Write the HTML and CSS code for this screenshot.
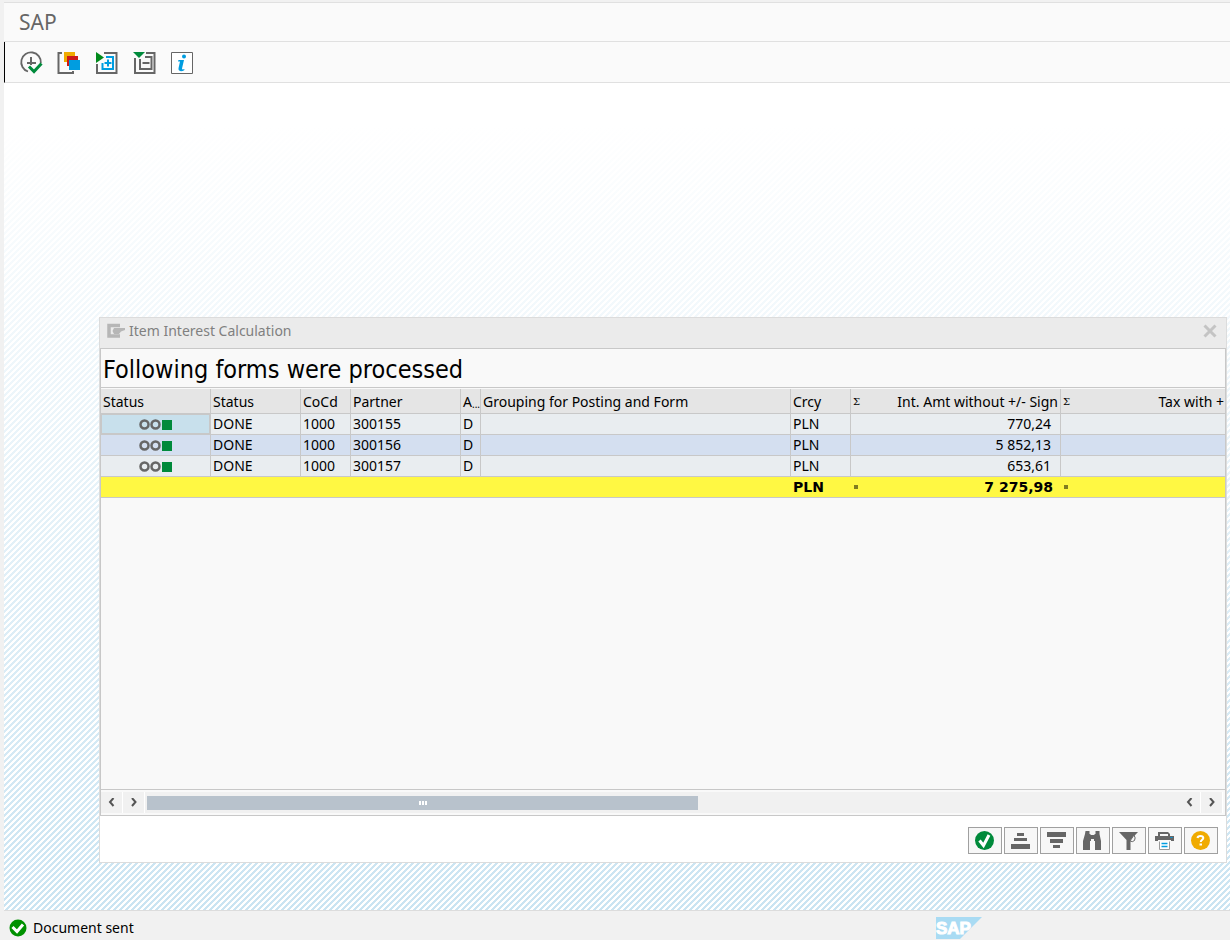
FILE: index.html
```html
<!DOCTYPE html>
<html lang="en">
<head>
<meta charset="utf-8">
<title>SAP</title>
<meta name="viewport" content="width=device-width, initial-scale=1">
<link rel="stylesheet" href="styles.css">
</head>
<body>
<div class="app">
  <header class="title-bar"><h1 class="title">SAP</h1></header>
  <nav class="toolbar" aria-label="Application toolbar">
    <button class="tool" aria-label="Execute">
      <svg width="24" height="24" viewBox="0 0 24 24" fill="none"><path d="M9 21.500A9.800 9.800 0 1 1 21.800 13" stroke="#666" stroke-width="1.800"/><path d="M12 7v8M8 13h9" stroke="#666" stroke-width="2"/><path d="M10 16.500l5 5 7.500-8" stroke="#008a3b" stroke-width="3"/></svg>
    </button>
    <button class="tool" aria-label="Get variant">
      <svg width="24" height="24" viewBox="0 0 24 24" fill="none"><path d="M5 3H1.500v20H16v-2" stroke="#666" stroke-width="2"/><path d="M7 2h11v10H7z" fill="#f0ab00"/><path d="M10 6h11v10H10z" fill="#cc1919"/><path d="M12 10h11v10H12z" fill="#009de0"/></svg>
    </button>
    <button class="tool" aria-label="Expand">
      <svg width="24" height="24" viewBox="0 0 24 24" fill="none"><path d="M9 3h12.500v20H2v-9" stroke="#666" stroke-width="2"/><path d="M1 2l8 5.500L1 13z" fill="#008a1b"/><path d="M11 7h7v12H7.500v-6" stroke="#009de0" stroke-width="2"/><path d="M13 9.500v7M9.500 13h7" stroke="#009de0" stroke-width="2"/></svg>
    </button>
    <button class="tool" aria-label="Collapse">
      <svg width="24" height="24" viewBox="0 0 24 24" fill="none"><path d="M13 3h8.500v20H2V8" stroke="#666" stroke-width="2"/><path d="M0 2h12L6 8z" fill="#008a3b"/><path d="M12 7h6.500v12H7V9" stroke="#666" stroke-width="2"/><path d="M9.500 13h7" stroke="#666" stroke-width="2"/></svg>
    </button>
    <button class="tool" aria-label="Information">
      <svg width="24" height="24" viewBox="0 0 24 24" fill="none"><path d="M.5 2.500h21v21H.5z" fill="#fff" stroke="#666"/><path d="M7.500 10H13l-2 8.500q0 1.500 2.500.5l-.3 1.200Q11 21.500 9 21q-2-.5-1.500-2.700L9 11.500H7z" fill="#009de0"/><circle cx="13" cy="6.500" r="2" fill="#009de0"/></svg>
    </button>
  </nav>
  <main class="workspace">
    <section class="dialog" role="dialog" aria-labelledby="dialog-title">
      <header class="dialog-head">
        <svg width="18" height="16" viewBox="0 0 18 16" fill="none"><path d="M13 2.500H2v10.500h11" stroke="#b6b6b6" stroke-width="3.500"/><path d="M7 5h11v2l-4 1.500-2 2.500H7L5.500 8z" fill="#b6b6b6"/></svg>
        <h2 class="dialog-title" id="dialog-title">Item Interest Calculation</h2>
        <button class="close" aria-label="Close"><svg width="14" height="14" viewBox="0 0 14 14"><path d="M1.500 1.500l11 11M12.500 1.500l-11 11" stroke="#c4c4c4" stroke-width="3"/></svg></button>
      </header>
      <div class="panel">
        <h3 class="panel-title">Following forms were processed</h3>
        <div class="grid">
          <table class="table">
            <colgroup><col class="c-light"><col class="c-status"><col class="c-code"><col class="c-partner"><col class="c-type"><col class="c-group"><col class="c-currency"><col class="c-amount"><col></colgroup>
            <thead>
              <tr><th>Status</th><th>Status</th><th>CoCd</th><th>Partner</th><th><span class="short">A<span class="dots">...</span></span></th><th>Grouping for Posting and Form</th><th>Crcy</th><th><span class="sum-head"><span class="sigma">Σ</span><span>Int. Amt without +/- Sign</span></span></th><th class="last"><span class="sum-head"><span class="sigma">Σ</span><span>Tax with +</span></span></th></tr>
            </thead>
            <tbody>
              <tr><td class="light selected"><svg width="33" height="11" viewBox="0 0 33 11"><g fill="none" stroke="#666" stroke-width="2.500"><circle cx="5.500" cy="5.500" r="4"/><circle cx="16.500" cy="5.500" r="4"/></g><path d="M23 1h10v10H23z" fill="#008a3b"/></svg></td><td>DONE</td><td>1000</td><td>300155</td><td>D</td><td></td><td>PLN</td><td class="num">770,24</td><td class="last"></td></tr>
              <tr class="alt"><td class="light"><svg width="33" height="11" viewBox="0 0 33 11"><g fill="none" stroke="#666" stroke-width="2.500"><circle cx="5.500" cy="5.500" r="4"/><circle cx="16.500" cy="5.500" r="4"/></g><path d="M23 1h10v10H23z" fill="#008a3b"/></svg></td><td>DONE</td><td>1000</td><td>300156</td><td>D</td><td></td><td>PLN</td><td class="num">5 852,13</td><td class="last"></td></tr>
              <tr><td class="light"><svg width="33" height="11" viewBox="0 0 33 11"><g fill="none" stroke="#666" stroke-width="2.500"><circle cx="5.500" cy="5.500" r="4"/><circle cx="16.500" cy="5.500" r="4"/></g><path d="M23 1h10v10H23z" fill="#008a3b"/></svg></td><td>DONE</td><td>1000</td><td>300157</td><td>D</td><td></td><td>PLN</td><td class="num">653,61</td><td class="last"></td></tr>
            </tbody>
            <tfoot>
              <tr><td colspan="6"></td><td>PLN</td><td><span class="total"><span class="mark"></span>7 275,98</span></td><td class="last"><span class="total"><span class="mark"></span></span></td></tr>
            </tfoot>
          </table>
        </div>
        <div class="scrollbar">
          <button class="arrow" aria-label="Scroll to start"><svg width="8" height="10" viewBox="0 0 8 10"><path d="M5.500 0L2 4l3.500 4" fill="none" stroke="#555" stroke-width="2"/></svg></button>
          <button class="arrow" aria-label="Scroll right"><svg width="8" height="10" viewBox="0 0 8 10"><path d="M2 0l3.500 4L2 8" fill="none" stroke="#555" stroke-width="2"/></svg></button>
          <div class="track"><div class="thumb"><span class="grip"></span><span class="grip"></span><span class="grip"></span></div></div>
          <button class="arrow" aria-label="Scroll left"><svg width="8" height="10" viewBox="0 0 8 10"><path d="M5.500 0L2 4l3.500 4" fill="none" stroke="#555" stroke-width="2"/></svg></button>
          <button class="arrow" aria-label="Scroll to end"><svg width="8" height="10" viewBox="0 0 8 10"><path d="M2 0l3.500 4L2 8" fill="none" stroke="#555" stroke-width="2"/></svg></button>
        </div>
      </div>
      <footer class="actions">
        <button class="action" aria-label="Continue"><svg width="20" height="20" viewBox="0 0 20 20"><circle cx="9.500" cy="9.500" r="9.500" fill="#008a3b"/><path d="M4.500 9.500l4 5 5.500-10.500" fill="none" stroke="#fff" stroke-width="3"/></svg></button>
        <button class="action" aria-label="Sort ascending"><svg width="20" height="20" viewBox="0 0 20 20" fill="#666"><path d="M6 2h7v3H6zM3 7h13v3H3zM0 13h19v5H0z"/></svg></button>
        <button class="action" aria-label="Sort descending"><svg width="20" height="20" viewBox="0 0 20 20" fill="#666"><path d="M0 1h19v5H0zM3 8h13v4H3zM6 14h7v3H6z"/></svg></button>
        <button class="action" aria-label="Find"><svg width="20" height="20" viewBox="0 0 20 20" fill="#666"><path d="M2.500 0h4v3h1v1h4V3h1V0h4v3l1.500 7v9h-6v-9h-1V8H8v2H7v9H0v-9l2-7z"/></svg></button>
        <button class="action" aria-label="Filter"><svg width="20" height="20" viewBox="0 0 20 20"><path d="M0 1h19l-7.500 8v10h-4V9z" fill="#666"/><path d="M11 10l4-6q2 3 .5 5.500-2 2-4.500.5" fill="#f5f5f5" stroke="#666"/></svg></button>
        <button class="action" aria-label="Print"><svg width="20" height="20" viewBox="0 0 20 20"><path d="M3 5V1h10l2 2v2h-2V3H5v2zM0 5h19v5h-3V9H3v1H0z" fill="#666"/><path d="M15.500 6.500h2" stroke="#009de0"/><path d="M4.500 10.500v8h10v-8" fill="#fff" stroke="#999"/><path d="M6.500 12.500h6M6.500 15.500h6" stroke="#009de0" stroke-width="1.500"/></svg></button>
        <button class="action" aria-label="Help"><svg width="20" height="20" viewBox="0 0 20 20"><circle cx="9.500" cy="9.500" r="9.500" fill="#f0ab00"/><path d="M6.500 7q.3-2 3-2t2.800 2q0 1.200-1.500 2-1 .6-1 2" fill="none" stroke="#fff" stroke-width="2"/><path d="M8.500 12.500H11v2H8.500z" fill="#fff"/></svg></button>
      </footer>
    </section>
  </main>
  <footer class="status-bar">
    <svg width="18" height="18" viewBox="0 0 18 18"><circle cx="9" cy="9" r="8.500" fill="#009100"/><path d="M3.500 8l4.500 4.500L14 5.500" fill="none" stroke="#fff" stroke-width="3"/></svg>
    <span class="message">Document sent</span>
    <svg class="logo" width="46" height="23" viewBox="0 0 46 23"><path d="M0 1h46L24 23H0z" fill="#a9dbf3"/><text class="logo-text" x="0" y="18">SAP</text></svg>
  </footer>
</div>
</body>
</html>
```
FILE: styles.css
```css
* { box-sizing: border-box; }

body {
  margin: 0;
  background: #f1f1f1;
  color: #000;
  font: 14px/20px "Noto Sans", sans-serif;
}

button {
  display: flex;
  align-items: center;
  justify-content: center;
  margin: 0;
  padding: 0;
  border: 0;
  background: none;
}

svg { display: block; flex: none; }

.app {
  display: flex;
  flex-direction: column;
  min-height: 100vh;
  padding: 2px 0 0 4px;
}

.title-bar {
  height: 40px;
  padding: 0 15px;
  border: solid #e0e0e0;
  border-width: 1px 0;
  background: #fafafa;
}

.title {
  margin: 0;
  color: #666;
  font-size: 21px;
  font-weight: normal;
  line-height: 38px;
}

.toolbar {
  display: flex;
  align-items: center;
  gap: 14px;
  height: 41px;
  padding-left: 14px;
  border-bottom: 1px solid #e0e0e0;
  border-left: 1px solid #000;
  background: #fafafa;
}

.tool { width: 24px; height: 24px; }

.workspace {
  display: flex;
  flex: 1;
  padding: 234px 3px 47px 95px;
  background:
    linear-gradient(#fff 0, #fff 5%, transparent 100%),
    linear-gradient(135deg, #cae4f2 25%, #fff 25%, #fff 50%, #cae4f2 50%, #cae4f2 75%, #fff 75%) 0 0 / 6px 6px;
}

.dialog {
  display: flex;
  flex: 1;
  flex-direction: column;
  min-width: 0;
  border: 1px solid #dcdcdc;
  background: #fff;
}

.dialog-head {
  display: flex;
  align-items: center;
  gap: 4px;
  height: 30px;
  padding: 0 9px 4px 7px;
  background: #ebebeb;
  color: #808080;
}

.dialog-title { flex: 1; margin: 0; font-size: 14px; font-weight: normal; }

.panel {
  display: flex;
  flex: 1;
  flex-direction: column;
  min-height: 0;
  border: 1px solid #c8c8c8;
  background: #f9f9f9;
}

.panel-title {
  margin: 0;
  padding: 4px 2px 0;
  border-bottom: 1px solid #c8c8c8;
  font-family: "DejaVu Sans Condensed", "DejaVu Sans", sans-serif;
  font-size: 25px;
  font-weight: normal;
  line-height: 34px;
}

.grid { flex: 1; overflow: hidden; padding-top: 1px; }

.table { width: 100%; border-spacing: 0; table-layout: fixed; }

.c-light, .c-partner { width: 110px; }
.c-status { width: 90px; }
.c-code { width: 50px; }
.c-type { width: 20px; }
.c-group { width: 310px; }
.c-currency { width: 60px; }
.c-amount { width: 210px; }

th, td {
  height: 21px;
  padding: 0 2px;
  border: solid #c8c8c8;
  border-width: 0 1px 1px 0;
  overflow: hidden;
  background: #e9edf0;
  line-height: 20px;
  text-align: left;
  white-space: nowrap;
}

th {
  height: 25px;
  padding-top: 2px;
  background: #e5e5e5;
  font-weight: normal;
  line-height: 22px;
}

.last { border-right: 0; padding-right: 1px; }
.alt td { background: #d4dff0; }
.light svg { margin: 0 auto; }
.light.selected { background: #c8e0ec; box-shadow: inset 0 0 0 1px #c8c8c8; }
.num { padding-right: 9px; text-align: right; }

tfoot td {
  border-right: 0;
  background: #fff843;
  font-family: "DejaVu Sans", sans-serif;
  font-weight: bold;
}

.short { display: flex; height: 22px; }
.dots { font-size: 10px; line-height: 26px; }
.sum-head, .total { display: flex; align-items: center; justify-content: space-between; }
.sigma { font: 10px/20px "DejaVu Serif", serif; }
.total { padding: 0 6px 0 1px; }
.mark { width: 4px; height: 4px; background: #807c20; }

.scrollbar {
  display: flex;
  align-items: center;
  height: 26px;
  padding: 0 2px 0 0;
  border-top: 1px solid #c8c8c8;
  background: #f9f9f9;
}

.arrow { width: 22px; height: 21px; border-right: 1px solid #fff; background: #f1f1f1; }
.track { flex: 1; height: 21px; padding: 4px 2px; background: #f1f1f1; }

.thumb {
  display: flex;
  align-items: center;
  justify-content: center;
  gap: 1px;
  width: 53.5%;
  height: 14px;
  background: #b8c2cc;
}

.grip { width: 2px; height: 4px; background: #fff; }

.actions {
  display: flex;
  justify-content: flex-end;
  gap: 2px;
  padding: 11px 8px 8px;
}

.action { width: 34px; height: 27px; border: 1px solid #a0a0a0; background: #f7f7f7; }

.status-bar {
  display: flex;
  align-items: center;
  gap: 6px;
  height: 30px;
  padding: 4px 248px 0 5px;
  border-top: 1px solid #dcdcdc;
}

.logo { margin-left: auto; }

.logo-text {
  fill: #fff;
  stroke: #fff;
  font: bold 17px "Liberation Sans", sans-serif;
}
```
